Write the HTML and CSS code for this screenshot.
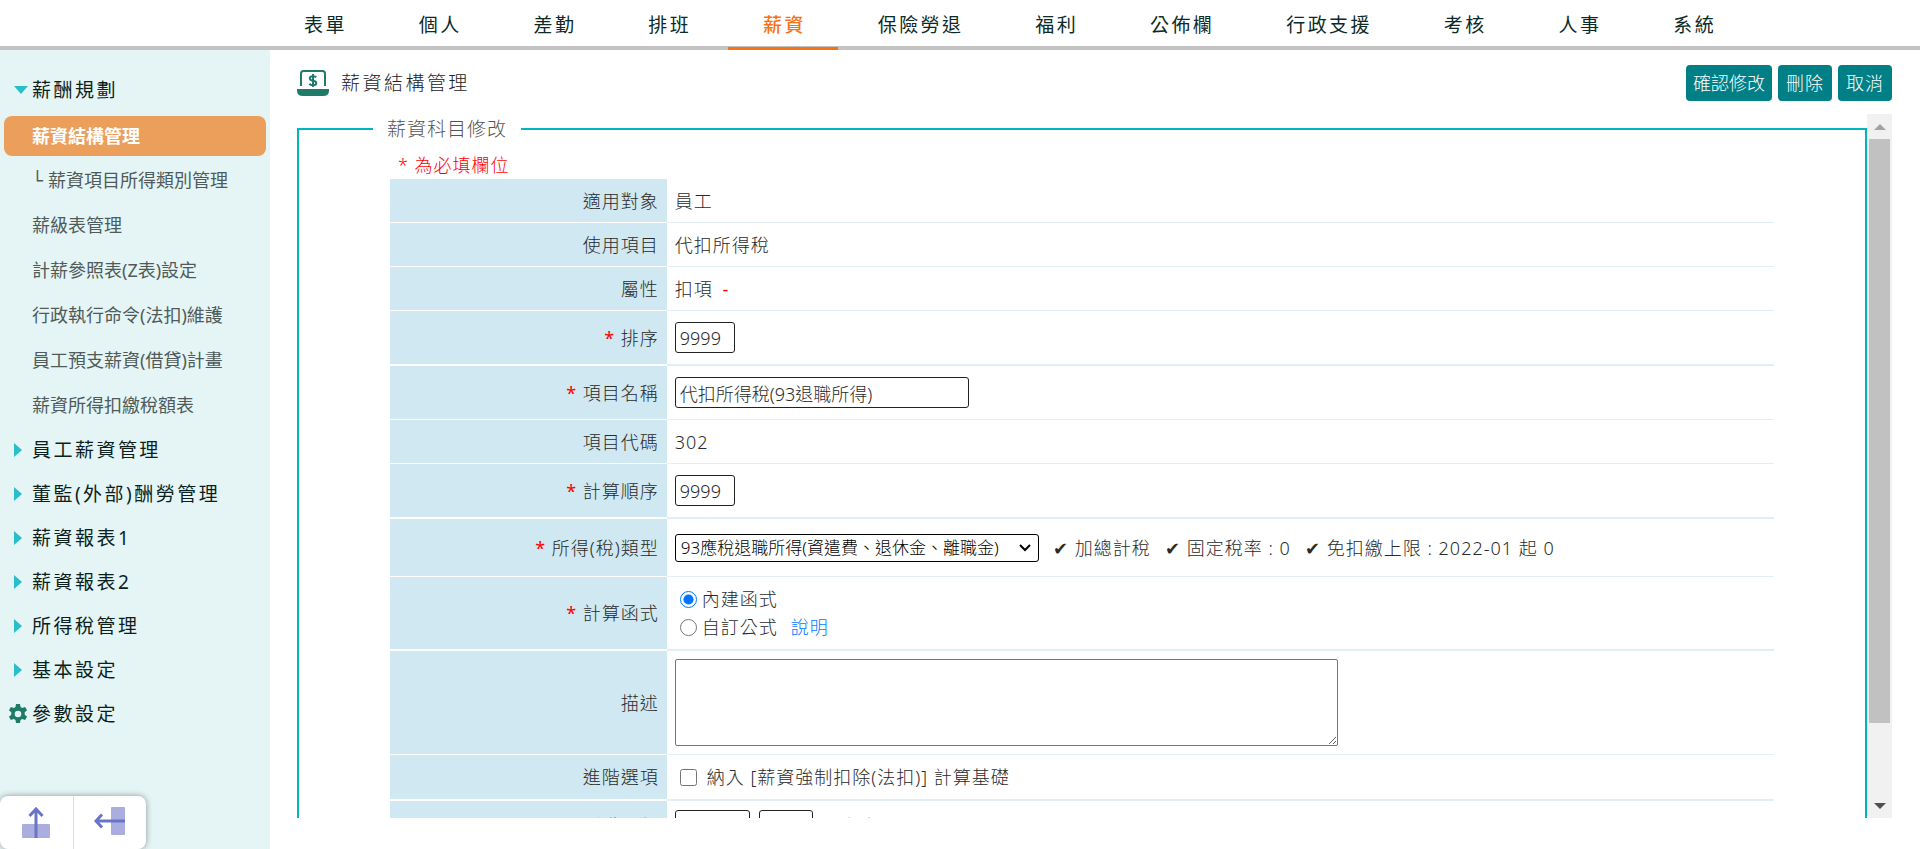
FILE: index.html
```html
<!DOCTYPE html>
<html lang="zh-Hant">
<head>
<meta charset="utf-8">
<meta name="viewport" content="width=device-width, initial-scale=1">
<title>薪資結構管理</title>
<link rel="stylesheet" href="styles.css">
</head>
<body>
<header class="topbar">
  <nav class="topnav" aria-label="主選單">
    <a href="#">表單</a>
    <a href="#">個人</a>
    <a href="#">差勤</a>
    <a href="#">排班</a>
    <a href="#" class="active" aria-current="page">薪資</a>
    <a href="#">保險勞退</a>
    <a href="#">福利</a>
    <a href="#">公佈欄</a>
    <a href="#">行政支援</a>
    <a href="#">考核</a>
    <a href="#">人事</a>
    <a href="#">系統</a>
  </nav>
</header>
<div class="layout">
  <aside class="sidebar">
    <nav class="side-nav" aria-label="薪資選單">
      <button type="button" class="group" aria-expanded="true"><span class="mark"><span class="caret-down"></span></span>薪酬規劃</button>
      <a class="item current" href="#" aria-current="page">薪資結構管理</a>
      <a class="item child" href="#"><span class="branch">└</span>薪資項目所得類別管理</a>
      <a class="item" href="#">薪級表管理</a>
      <a class="item" href="#">計薪參照表(Z表)設定</a>
      <a class="item" href="#">行政執行命令(法扣)維護</a>
      <a class="item" href="#">員工預支薪資(借貸)計畫</a>
      <a class="item" href="#">薪資所得扣繳稅額表</a>
      <button type="button" class="group"><span class="mark"><span class="caret-right"></span></span>員工薪資管理</button>
      <button type="button" class="group"><span class="mark"><span class="caret-right"></span></span>董監(外部)酬勞管理</button>
      <button type="button" class="group"><span class="mark"><span class="caret-right"></span></span>薪資報表1</button>
      <button type="button" class="group"><span class="mark"><span class="caret-right"></span></span>薪資報表2</button>
      <button type="button" class="group"><span class="mark"><span class="caret-right"></span></span>所得稅管理</button>
      <button type="button" class="group"><span class="mark"><span class="caret-right"></span></span>基本設定</button>
      <button type="button" class="group"><span class="mark mark-gear"><svg width="20" height="20" viewBox="0 0 20 20" aria-hidden="true"><path fill="#1f7a68" fill-rule="evenodd" d="M8 0h4l.5 3 1.7 1 2.9-1.1 2 3.4-2.4 2v2.4l2.4 2-2 3.4-2.9-1.1-1.7 1-.5 3H8l-.5-3-1.7-1-2.9 1.1-2-3.4 2.4-2V8.3l-2.4-2 2-3.400L5.800 4l1.700-1zM10 6.700a3.300 3.300 0 1 0 0 6.600 3.300 3.300 0 0 0 0-6.600z"/></svg></span>參數設定</button>
    </nav>
    <div class="dock">
      <button type="button" aria-label="收合上方選單"><svg width="30" height="32" viewBox="0 0 30 32" aria-hidden="true"><rect x="1" y="17" width="28" height="14" rx="1" fill="#a9aede"/><path d="M15 31V2M8.500 9 15 2l6.500 7" fill="none" stroke="#6a75c9" stroke-width="3"/></svg></button>
      <button type="button" aria-label="收合側邊選單"><svg width="32" height="30" viewBox="0 0 32 30" aria-hidden="true"><rect x="17" y="1" width="14" height="28" rx="1" fill="#a9aede"/><path d="M31 15H2M8 8.500 2 15l6 6.500" fill="none" stroke="#6a75c9" stroke-width="3"/></svg></button>
    </div>
  </aside>
  <main class="content">
    <div class="page-head">
      <svg class="page-icon" width="32" height="28" viewBox="0 0 32 28" aria-hidden="true"><path d="M4 17V4.500Q4 2 6.500 2h19Q28 2 28 4.500V17" fill="none" stroke="#1f7a68" stroke-width="2"/><path d="M0 20h32v1.500q0 5.500-6 5.500H6q-6 0-6-5.500z" fill="#1f7a68"/><path d="M19.200 8.300Q18.300 7.200 16 7.200c-2 0-3.200.9-3.200 2.200 0 3.200 6.500 1.400 6.500 4.500 0 1.400-1.300 2.300-3.400 2.300-2.200 0-3.200-1-3.500-1.500M16 5v13" fill="none" stroke="#1f7a68" stroke-width="2"/></svg>
      <h1>薪資結構管理</h1>
      <div class="actions">
        <button type="submit" form="salary-form" class="tight">確認修改</button>
        <button type="button">刪除</button>
        <button type="button">取消</button>
      </div>
    </div>
    <div class="scroll-frame">
      <form id="salary-form" class="scroll-body">
        <fieldset>
          <legend>薪資科目修改</legend>
          <p class="note">* 為必填欄位</p>
          <table>
            <tbody>
              <tr><th scope="row">適用對象</th><td>員工</td></tr>
              <tr><th scope="row">使用項目</th><td>代扣所得稅</td></tr>
              <tr><th scope="row">屬性</th><td>扣項 <span class="minus">-</span></td></tr>
              <tr class="field strong"><th scope="row"><label for="sort"><b>*</b> 排序</label></th><td><input type="text" id="sort" class="short" value="9999"></td></tr>
              <tr class="field-name"><th scope="row"><label for="name"><b>*</b> 項目名稱</label></th><td><input type="text" id="name" class="wide" value="代扣所得稅(93退職所得)"></td></tr>
              <tr><th scope="row">項目代碼</th><td>302</td></tr>
              <tr class="field strong"><th scope="row"><label for="order"><b>*</b> 計算順序</label></th><td><input type="text" id="order" class="short" value="9999"></td></tr>
              <tr class="type"><th scope="row"><label for="tax"><b>*</b> 所得(稅)類型</label></th><td><div class="inline"><span class="select-box"><select id="tax"><option>93應稅退職所得(資遣費、退休金、離職金)</option></select><svg width="12" height="8" viewBox="0 0 12 8" aria-hidden="true"><path d="m1 1 5 5 5-5" fill="none" stroke="#000" stroke-width="2"/></svg></span><span class="flag"><i>✔</i>加總計稅</span><span class="flag"><i>✔</i>固定稅率 : 0</span><span class="flag"><i>✔</i>免扣繳上限 : 2022-01 起 0</span></div></td></tr>
              <tr class="formula strong"><th scope="row"><b>*</b> 計算函式</th><td>
                <div class="choice"><input type="radio" name="fn" id="fn1" checked><label for="fn1">內建函式</label></div>
                <div class="choice"><input type="radio" name="fn" id="fn2"><label for="fn2">自訂公式</label><a href="#">說明</a></div>
              </td></tr>
              <tr class="desc"><th scope="row"><label for="desc">描述</label></th><td><textarea id="desc"></textarea></td></tr>
              <tr class="strong advanced"><th scope="row">進階選項</th><td><div class="choice check"><input type="checkbox" id="adv"><label for="adv">納入 [薪資強制扣除(法扣)] 計算基礎</label></div></td></tr>
              <tr class="period"><th scope="row"><label for="year">到職月份</label></th><td><div class="inline"><input type="text" id="year" class="year"><input type="text" class="month" aria-label="月份"><a href="#">清除</a></div></td></tr>
            </tbody>
          </table>
        </fieldset>
      </form>
      <div class="scrollbar" aria-hidden="true"><span class="arrow up"></span><span class="thumb"></span><span class="arrow down"></span></div>
    </div>
  </main>
</div>
</body>
</html>
```
FILE: styles.css
```css
* { box-sizing: border-box; }
body {
  margin: 0;
  height: 100vh;
  display: flex;
  flex-direction: column;
  overflow: hidden;
  background: #fff;
  color: #2a2a2a;
  font: 300 18px/26px "Noto Sans", "Noto Sans CJK TC", sans-serif;
}
button, input, select, textarea { font: inherit; color: inherit; }
a { color: #007bff; text-decoration: none; }
h1, p { margin: 0; font-weight: inherit; }

.topbar { flex: none; height: 50px; border-bottom: 4px solid #c3c3c3; padding-left: 269px; }
.topnav { display: flex; gap: 5px; }
.topnav a {
  height: 50px;
  padding: 0 32px 0 35px;
  border-bottom: 3px solid transparent;
  color: #0b2a28;
  font-size: 19px;
  line-height: 50px;
  letter-spacing: 0.125em;
  font-weight: 400;
  white-space: nowrap;
}
.topnav a.active { color: #f57314; border-color: #f57314; font-weight: 500; }

.layout { flex: 1; min-height: 0; display: flex; }
.sidebar { position: relative; flex: none; width: 270px; background: #e5f5f5; padding: 18px 4px 0; }
.side-nav { display: flex; flex-direction: column; font-weight: 400; }
.group {
  display: flex;
  align-items: center;
  height: 44px;
  padding: 0;
  border: 0;
  background: none;
  color: #0b1f1f;
  font-size: 19px;
  letter-spacing: 0.13em;
  text-align: left;
}
.mark { display: flex; align-items: center; width: 28px; padding-left: 10px; }
.mark-gear { padding-left: 4px; }
.caret-down { border: 7px solid transparent; border-top: 8px solid #28bfca; border-bottom: 0; }
.caret-right { border: 7px solid transparent; border-left: 8px solid #28bfca; border-right: 0; }
.item { height: 40px; margin: 2px 0 3px; padding-left: 28px; border-radius: 8px; color: #4f5b5b; line-height: 40px; }
.item.current { margin: 4px 0 2px; background: #ec9e5b; color: #fff; font-weight: 700; }
.branch { display: inline-block; width: 16px; font-family: "DejaVu Sans", sans-serif; }
.dock {
  position: absolute;
  left: 0;
  bottom: 0;
  display: flex;
  width: 146px;
  height: 53px;
  border-radius: 8px;
  background: #fff;
  box-shadow: 0 0 6px rgba(0, 0, 0, 0.4);
}
.dock button { flex: 1; display: flex; align-items: center; justify-content: center; padding: 0; border: 0; background: none; }
.dock button + button { padding-bottom: 4px; border-left: 1px solid #ddd; }

.content { flex: 1; min-width: 0; display: flex; flex-direction: column; padding: 15px 28px 31px 27px; }
.page-head { display: flex; align-items: center; gap: 12px; height: 36px; }
h1 { color: #222; font-size: 19px; letter-spacing: 0.13em; }
.actions { display: flex; gap: 6px; margin-left: auto; }
.actions button {
  height: 36px;
  padding: 0 8px;
  border: 0;
  border-radius: 4px;
  background: #008086;
  color: #fff;
  letter-spacing: 1px;
}
.actions .tight { padding: 0 7px; letter-spacing: 0; }

.scroll-frame { flex: 1; min-height: 0; display: flex; margin-top: 13px; }
.scroll-body { flex: 1; min-width: 0; overflow: hidden; }
fieldset { margin: 0; padding: 0 91px 20px; border: 2px solid #00b5c0; }
legend { margin-left: -17px; padding: 0 14px; color: #555; font-size: 19px; line-height: 30px; letter-spacing: 1px; }
.note { padding: 8px 8px 1px; color: #f00; letter-spacing: 1px; }
table { width: 100%; border-collapse: separate; border-spacing: 0; letter-spacing: 1px; }
tr { height: 44px; }
th { width: 20%; padding: 0 8px; background: #cfe8f1; border-bottom: 1px solid #fff; font-weight: 300; text-align: right; }
td { padding: 0 8px; border-bottom: 1px solid #e1eef5; }
b, .minus { color: #f00; font-weight: 400; }
.minus { margin-left: 4px; }
.strong th, .strong td { border-bottom-width: 2px; }
.field { height: 55px; }
.field-name { height: 54px; }
.type { height: 58px; }
.formula { height: 74px; }
.desc { height: 104px; }
.advanced { height: 46px; }
.period { height: 50px; }
input[type="text"] { display: block; height: 31px; padding: 0 4px; border: 1px solid #222; border-radius: 3px; background: #fff; }
.short { width: 60px; }
.wide { width: 294px; }
.year { width: 75px; }
.month { width: 54px; }
.inline { display: flex; align-items: center; gap: 9px; }
.inline a { margin-left: 16px; }
.select-box { display: flex; align-items: center; width: 364px; }
select { width: 364px; height: 28px; padding: 0 5px; border: 1px solid #000; border-radius: 3px; background: none; color: #000; font-size: 17px; appearance: none; }
.select-box svg { flex: none; margin-left: -20px; margin-right: 8px; }
.flag { display: flex; gap: 6px; margin-left: 5px; }
.flag i { width: 16px; font-style: normal; letter-spacing: 0; }
.choice { display: flex; align-items: center; height: 28px; gap: 5px; padding-left: 5px; }
.choice input { width: 17px; height: 17px; margin: 0; accent-color: #0075ff; }
.choice a { margin-left: 8px; }
.check { gap: 10px; }
textarea { display: block; width: 663px; height: 87px; border: 1px solid #767676; border-radius: 2px; background: #fff; resize: both; }

.scrollbar { flex: none; display: flex; flex-direction: column; align-items: center; width: 25px; background: #f1f1f1; }
.arrow { flex: none; display: flex; align-items: center; justify-content: center; height: 25px; }
.arrow::before { content: ""; border: 6px solid transparent; }
.up::before { border-top: 0; border-bottom-color: #a3a3a3; }
.down { margin-top: auto; }
.down::before { border-bottom: 0; border-top-color: #505050; }
.thumb { flex: none; width: 21px; height: 83%; background: #c1c1c1; }
```
